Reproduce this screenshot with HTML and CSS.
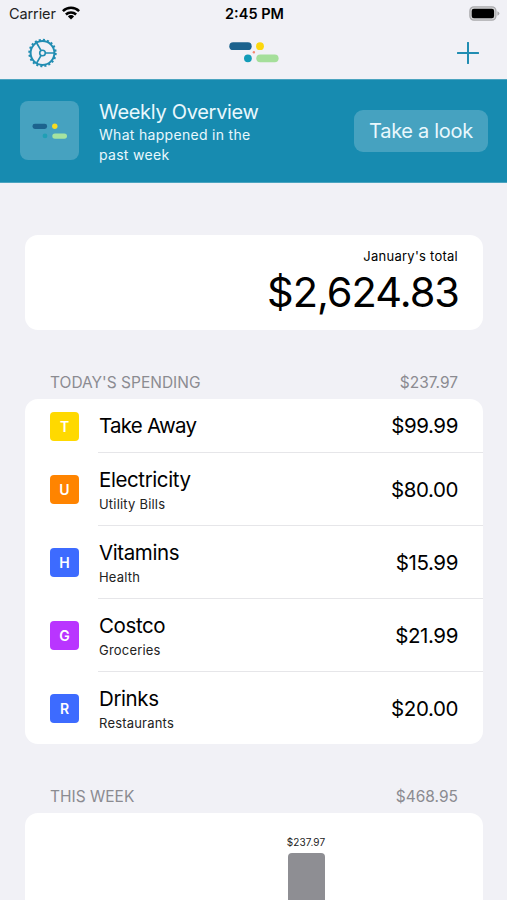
FILE: index.html
```html
<!DOCTYPE html>
<html lang="en">
<head>
    <meta charset="UTF-8">
    <meta name="viewport" content="width=device-width, initial-scale=1.0">
    <title>Spending</title>
    <link rel="stylesheet" href="styles.css">
</head>
<body>
    <div class="status-bar">
        <div class="carrier">
            <span>Carrier</span>
            <svg class="wifi" width="18" height="14" viewBox="0 0 18 14">
                <g fill="none" stroke="#000" stroke-width="2.5">
                    <path d="M0.9 5.2A11.5 11.5 0 0 1 17.1 5.2"/>
                    <path d="M3.9 8.5A7.3 7.3 0 0 1 14.1 8.5"/>
                </g>
                <path d="M9 13.6L5.9 10.4A4.4 4.4 0 0 1 12.1 10.4Z"/>
            </svg>
        </div>
        <div class="time">2:45 PM</div>
        <svg class="battery" width="31" height="15" viewBox="0 0 31 15">
            <rect x="0.9" y="0.9" width="26" height="13.2" rx="4" fill="#d5d5d7" stroke="#a9a9ac" stroke-width="1.3"/>
            <rect x="2.7" y="2.7" width="22.4" height="9.6" rx="2.2"/>
            <path d="M28.4 5.2Q30.4 6 30.4 7.5T28.4 9.8Z" fill="#a9a9ac"/>
        </svg>
    </div>

    <div class="navbar">
        <svg class="gear" width="31" height="30" viewBox="-15.5 -15 31 30">
            <g fill="none" stroke="#218db2">
                <circle r="13.2" stroke-width="2" stroke-dasharray="2.07 2.077"/>
                <circle r="11.9" stroke-width="2"/>
                <circle r="2.8" stroke-width="1.6"/>
                <path d="M2.8 0H11.5M-1.4 -2.4L-5.8 -10M-1.4 2.4L-5.8 10" stroke-width="1.7"/>
            </g>
        </svg>
        <svg class="logo" width="50" height="21" viewBox="0 0 50 21">
            <rect x="0.3" y="0.3" width="22.4" height="7.8" rx="3.9" fill="#1c638e"/>
            <circle cx="31" cy="4.2" r="3.9" fill="#fcd70d"/>
            <circle cx="24.9" cy="10.2" r="1.2" fill="#f58970"/>
            <circle cx="18.9" cy="16.3" r="3.9" fill="#129cb8"/>
            <rect x="27.3" y="12.4" width="22.3" height="7.8" rx="3.9" fill="#a5df9a"/>
        </svg>
        <svg class="plus" width="22" height="22" viewBox="0 0 22 22">
            <path d="M11 0.8V21.2M0.8 11H21.2" stroke="#218db2" stroke-width="2" stroke-linecap="round"/>
        </svg>
    </div>

    <div class="banner">
        <div class="banner-icon">
            <svg width="36" height="16" viewBox="0 0 36 16">
                <rect x="0.5" y="0.7" width="14.6" height="5.2" rx="2.4" fill="#1c638e"/>
                <circle cx="22.8" cy="3.3" r="2.7" fill="#f6dc22"/>
                <circle cx="13" cy="12.9" r="2.4" fill="#209fb5"/>
                <rect x="20.3" y="10.5" width="14.7" height="5.2" rx="2.6" fill="#a5e3a0"/>
            </svg>
        </div>
        <div class="banner-text">
            <div class="banner-title">Weekly Overview</div>
            <div class="banner-sub">What happened in the past week</div>
        </div>
        <button class="look">Take a look</button>
    </div>

    <div class="content">
        <div class="card total">
            <div class="total-label">January's total</div>
            <div class="total-value">$2,624.83</div>
        </div>

        <div class="section-header">
            <span>TODAY'S SPENDING</span>
            <span>$237.97</span>
        </div>
        <div class="card list">
            <div class="row short">
                <div class="badge yellow">T</div>
                <div class="info">
                    <div class="name tight">Take Away</div>
                    <div class="amount">$99.99</div>
                </div>
            </div>
            <div class="row">
                <div class="badge orange">U</div>
                <div class="info">
                    <div>
                        <div class="name">Electricity</div>
                        <div class="category">Utility Bills</div>
                    </div>
                    <div class="amount">$80.00</div>
                </div>
            </div>
            <div class="row">
                <div class="badge blue">H</div>
                <div class="info">
                    <div>
                        <div class="name">Vitamins</div>
                        <div class="category">Health</div>
                    </div>
                    <div class="amount">$15.99</div>
                </div>
            </div>
            <div class="row">
                <div class="badge purple">G</div>
                <div class="info">
                    <div>
                        <div class="name">Costco</div>
                        <div class="category">Groceries</div>
                    </div>
                    <div class="amount">$21.99</div>
                </div>
            </div>
            <div class="row">
                <div class="badge blue">R</div>
                <div class="info">
                    <div>
                        <div class="name">Drinks</div>
                        <div class="category">Restaurants</div>
                    </div>
                    <div class="amount">$20.00</div>
                </div>
            </div>
        </div>

        <div class="section-header">
            <span>THIS WEEK</span>
            <span>$468.95</span>
        </div>
        <div class="card chart">
            <div class="column">
                <div class="bar-label">$237.97</div>
                <div class="bar"></div>
            </div>
        </div>
    </div>
</body>
</html>
```

FILE: styles.css
```css
* {
    box-sizing: border-box;
}

body {
    margin: 0;
    height: 100vh;
    background-color: #f1f1f6;
    color: #000;
    font-family: Inter, "Liberation Sans", sans-serif;
    display: flex;
    flex-direction: column;
}

svg {
    display: block;
}

/* top bars */
.status-bar {
    height: 28px;
    flex: none;
    padding: 0 7px 1px 9px;
    display: grid;
    grid-template-columns: 1fr auto 1fr;
    align-items: center;
    font-size: 14.5px;
}

.carrier {
    display: flex;
    align-items: center;
    gap: 6px;
    color: #222;
    letter-spacing: -0.1px;
}

.wifi {
    margin-top: -1px;
}

.time {
    font-weight: 600;
}

.battery {
    justify-self: end;
    margin-top: -1px;
}

.navbar {
    height: 51px;
    flex: none;
    padding: 0 28px 2px 27px;
    display: grid;
    grid-template-columns: 1fr auto 1fr;
    align-items: center;
}

.logo {
    margin-left: 2px;
}

.plus {
    justify-self: end;
}

/* weekly banner */
.banner {
    height: 104px;
    flex: none;
    padding: 0 19px 1px 20px;
    background-color: #178bb0;
    border-top: 1px solid #4ba4c0;
    border-bottom: 1px solid #4ba4c0;
    color: #e9f8fd;
    display: flex;
    align-items: center;
}

.banner-icon {
    width: 59px;
    height: 59px;
    border-radius: 8px;
    background-color: #46a2c0;
    display: flex;
    align-items: center;
    justify-content: center;
}

.banner-text {
    margin-left: 20px;
    padding-top: 3px;
    width: 170px;
}

.banner-title {
    font-size: 20px;
    line-height: 25px;
    letter-spacing: -0.3px;
}

.banner-sub {
    font-size: 14px;
    line-height: 20px;
    letter-spacing: 0.3px;
}

.look {
    margin-left: auto;
    width: 134px;
    height: 42px;
    border: none;
    border-radius: 9px;
    padding: 0;
    background-color: #46a2c0;
    color: #e9f8fd;
    font-family: inherit;
    font-size: 20px;
    letter-spacing: -0.3px;
}

.content {
    flex: 1;
    min-height: 0;
    padding: 52px 24px 0 25px;
    display: flex;
    flex-direction: column;
}

.card {
    background-color: #fff;
    border-radius: 13px;
}

.total {
    height: 95px;
    flex: none;
    padding: 12px 25px 0 0;
    text-align: right;
}

.total-label {
    font-size: 13px;
    line-height: 18px;
    letter-spacing: 0.25px;
}

.total-value {
    font-size: 41.5px;
    line-height: 54px;
    letter-spacing: -1px;
    margin-right: -1px;
}

.section-header {
    height: 69px;
    flex: none;
    padding: 0 25px 6px;
    display: flex;
    justify-content: space-between;
    align-items: flex-end;
    font-size: 15.5px;
    line-height: 20px;
    color: #8b8b91;
}

/* transactions */
.list {
    flex: none;
}

.row {
    height: 73px;
    padding-left: 25px;
    display: flex;
    align-items: center;
}

.row.short {
    height: 54px;
}

.badge {
    width: 29px;
    height: 29px;
    border-radius: 4px;
    color: #fff;
    font-size: 14px;
    font-weight: 600;
    display: flex;
    align-items: center;
    justify-content: center;
}

.yellow { background-color: #ffd900; }
.orange { background-color: #ff8400; }
.blue { background-color: #3d6bff; }
.purple { background-color: #b935ff; }

.info {
    flex: 1;
    height: 100%;
    margin-left: 19px;
    padding: 1px 25px 0 1px;
    border-bottom: 1px solid #e6e6e9;
    display: flex;
    justify-content: space-between;
    align-items: center;
}

.row:last-child {
    height: 72px;
}

.row:last-child .info {
    border-bottom: none;
}

.name,
.amount {
    font-size: 20.5px;
    line-height: 28px;
    letter-spacing: -0.4px;
}

.name.tight {
    letter-spacing: -0.75px;
}

.category {
    font-size: 13px;
    line-height: 18px;
    margin-top: 1px;
    letter-spacing: 0.2px;
    color: #222;
}

/* week chart */
.chart {
    flex: 1;
    min-height: 0;
    border-radius: 13px 13px 0 0;
    padding: 22px 0 0 262px;
    display: flex;
}

.column {
    width: 38px;
    display: flex;
    flex-direction: column;
    align-items: center;
}

.bar-label {
    font-size: 10px;
    line-height: 14px;
    margin-bottom: 4px;
    letter-spacing: 0.15px;
    color: #222;
}

.bar {
    width: 37px;
    flex: 1;
    border-radius: 4px 4px 0 0;
    background-color: #8e8e93;
}
```
